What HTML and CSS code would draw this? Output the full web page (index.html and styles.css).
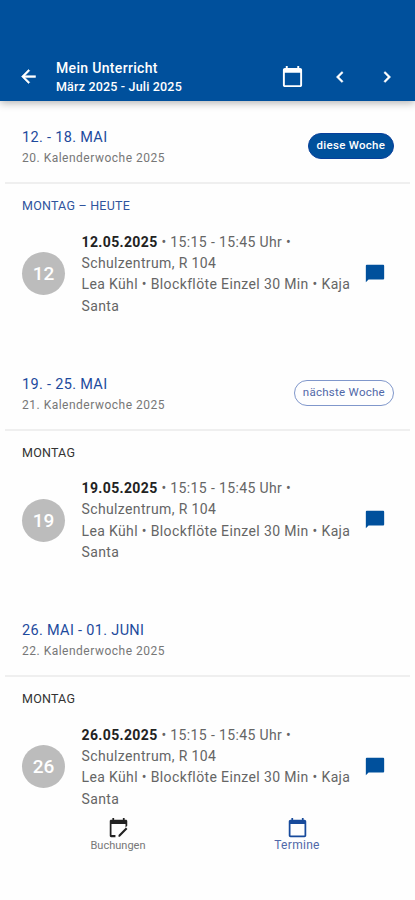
FILE: index.html
```html
<!DOCTYPE html>
<html lang="de">
<head>
<meta charset="utf-8">
<meta name="viewport" content="width=device-width, initial-scale=1">
<title>Mein Unterricht</title>
<link rel="stylesheet" href="styles.css">
</head>
<body>
<svg class="defs" aria-hidden="true">
  <symbol id="calendar" viewBox="0 0 24 24"><path d="M20 3h-1V1h-2v2H7V1H5v2H4c-1.100 0-2 .9-2 2v16c0 1.100.9 2 2 2h16c1.100 0 2-.9 2-2V5c0-1.100-.9-2-2-2zm0 18H4V8h16z"/></symbol>
  <symbol id="chat" viewBox="0 0 24 24"><path d="M21 2H3c-.6 0-1 .4-1 1v18l3-3h16c.6 0 1-.4 1-1V3c0-.6-.4-1-1-1z"/></symbol>
</svg>
<header class="appbar">
  <svg class="back" viewBox="0 0 24 24"><path stroke="currentColor" stroke-width=".6" d="M20 11H7.830l5.590-5.590L12 4l-8 8 8 8 1.410-1.410L7.830 13H20z"/></svg>
  <div class="heading">
    <h1>Mein Unterricht</h1>
    <p>März 2025 - Juli 2025</p>
  </div>
  <svg class="cal"><use href="#calendar"/></svg>
  <svg class="prev" viewBox="0 0 24 24"><path stroke="currentColor" stroke-width=".5" d="M15.410 7.410 14 6l-6 6 6 6 1.410-1.410L10.830 12z"/></svg>
  <svg class="next" viewBox="0 0 24 24"><path stroke="currentColor" stroke-width=".5" d="M8.590 16.590 13.170 12 8.590 7.410 10 6l6 6-6 6z"/></svg>
</header>
<main>
  <section class="week">
    <div class="week-head">
      <div><h2>12. - 18. MAI</h2><p class="kw">20. Kalenderwoche 2025</p></div>
      <span class="chip filled">diese Woche</span>
    </div>
    <h3 class="day today">MONTAG – HEUTE</h3>
    <article class="lesson">
      <span class="date">12</span>
      <p class="info"><span><b>12.05.2025</b> • 15:15 - 15:45 Uhr •</span><span>Schulzentrum, R 104</span><span>Lea Kühl • Blockflöte Einzel 30 Min • Kaja</span><span>Santa</span></p>
      <svg class="chat"><use href="#chat"/></svg>
    </article>
  </section>
  <section class="week">
    <div class="week-head">
      <div><h2>19. - 25. MAI</h2><p class="kw">21. Kalenderwoche 2025</p></div>
      <span class="chip">nächste Woche</span>
    </div>
    <h3 class="day">MONTAG</h3>
    <article class="lesson">
      <span class="date">19</span>
      <p class="info"><span><b>19.05.2025</b> • 15:15 - 15:45 Uhr •</span><span>Schulzentrum, R 104</span><span>Lea Kühl • Blockflöte Einzel 30 Min • Kaja</span><span>Santa</span></p>
      <svg class="chat"><use href="#chat"/></svg>
    </article>
  </section>
  <section class="week last">
    <div class="week-head">
      <div><h2>26. MAI - 01. JUNI</h2><p class="kw">22. Kalenderwoche 2025</p></div>
    </div>
    <h3 class="day">MONTAG</h3>
    <article class="lesson">
      <span class="date">26</span>
      <p class="info"><span><b>26.05.2025</b> • 15:15 - 15:45 Uhr •</span><span>Schulzentrum, R 104</span><span>Lea Kühl • Blockflöte Einzel 30 Min • Kaja</span><span>Santa</span></p>
      <svg class="chat"><use href="#chat"/></svg>
    </article>
  </section>
</main>
<nav class="tabs">
  <a class="tab">
    <svg viewBox="0 0 24 24"><path d="M3.500 3H5V1h2v2h10V1h2v2h1.500c.8 0 1.500.7 1.500 1.500V10l-2 2V8H4v12.500h4.500V23H3.500c-.9 0-1.500-.7-1.500-1.500v-17C2 3.700 2.700 3 3.500 3zM12 20.500l8.500-8.500 1.700 1.700-8.700 8.800H12z"/></svg>
    <span>Buchungen</span>
  </a>
  <a class="tab active">
    <svg><use href="#calendar"/></svg>
    <span>Termine</span>
  </a>
</nav>
</body>
</html>
```
FILE: styles.css
```css
* { box-sizing: border-box; }
body {
  margin: 0;
  height: 900px;
  overflow: hidden;
  display: flex;
  flex-direction: column;
  background: #fefefe;
  color: #656565;
  font-family: Roboto, sans-serif;
}
h1, h2, h3, p { margin: 0; font-weight: 400; }
svg { display: block; fill: currentColor; flex: none; }
.defs { display: none; }

.appbar {
  height: 101px;
  flex: none;
  padding: 57px 18px 0 18px;
  display: flex;
  align-items: flex-start;
  background: #00509c;
  color: #fff;
  box-shadow: 0 2px 8px rgba(0, 0, 0, .3);
}
.heading { flex: 1; margin-left: 18px; white-space: nowrap; }
.heading h1 { font-size: 14px; line-height: 22px; font-weight: 500; letter-spacing: .33px; }
.heading p { font-size: 12.500px; line-height: 16px; font-weight: 500; letter-spacing: .18px; }
.back { width: 21px; height: 21px; margin-top: 8.500px; margin-right: -1px; }
.cal { width: 23px; height: 23px; margin-top: 8px; }
.prev, .next { width: 22px; height: 22px; margin-top: 8.500px; }
.prev { margin-left: 25.500px; }
.next { margin-left: 25px; margin-right: -1px; }

.week { height: 246.500px; }
.week.last { height: 223px; }
.week-head {
  height: 83px;
  margin: 0 5px;
  padding: 26px 16px 0 17px;
  display: flex;
  justify-content: space-between;
  align-items: flex-start;
  border-bottom: 2px solid #efefef;
}
.week h2 { font-size: 14.500px; line-height: 22px; color: #1d4a9d; letter-spacing: .32px; }
.kw { font-size: 12px; line-height: 19px; color: #777; letter-spacing: .5px; }
.chip {
  height: 26px;
  margin-top: 6px;
  padding: 0 8px;
  border: 1px solid #8097cb;
  border-radius: 13px;
  color: #5068a8;
  font-size: 11.500px;
  line-height: 23px;
  letter-spacing: .27px;
  white-space: nowrap;
}
.chip.filled { background: #00509c; border-color: #083f9b; color: #fff; font-weight: 500; letter-spacing: .28px; padding: 0 7.800px; }
.day { padding: 14px 22px 0; font-size: 12.500px; line-height: 16px; color: #333; letter-spacing: .22px; }
.day.today { color: #2f549d; }
.lesson { display: flex; align-items: flex-start; padding: 17.500px 30px 0 22px; }
.date {
  width: 43px;
  height: 43px;
  margin-top: 20.500px;
  border-radius: 50%;
  background: #bcbcbc;
  color: #fff;
  font-size: 19px;
  font-weight: 500;
  line-height: 43px;
  text-align: center;
}
.info {
  flex: 1;
  margin-left: 16.500px;
  font-size: 14px;
  line-height: 21.400px;
  letter-spacing: .37px;
  white-space: nowrap;
}
.info span { display: block; }
.info b { color: #222; font-weight: 700; }
.chat { width: 22px; height: 22px; margin: 31px -.5px 0 0; color: #00509c; }

.tabs { display: flex; padding: 0 29px; }
.tab {
  flex: 1;
  display: flex;
  flex-direction: column;
  align-items: center;
  font-size: 11px;
  line-height: 15px;
  color: #777;
}
.tab svg { width: 21px; height: 21px; color: #222; }
.tab.active { color: #5068a8; font-size: 12px; letter-spacing: .3px; padding-left: 1px; }
.tab.active svg { color: #174a9b; }
```
